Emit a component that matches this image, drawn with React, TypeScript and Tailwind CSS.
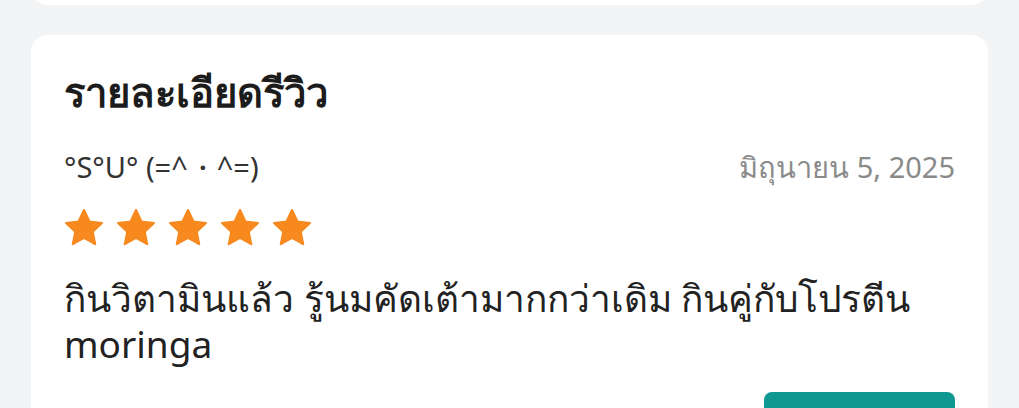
const STARS = [0, 1, 2, 3, 4];

function Star() {
  return (
    <svg viewBox="0 0 24 24" className="h-[44px] w-[44px]" fill="#f7891f">
      <path d="M12 2.2l2.95 6.3 6.85.8-5.08 4.7 1.37 6.8L12 17.4l-6.09 3.4 1.37-6.8L2.2 9.3l6.85-.8z" strokeLinejoin="round" stroke="#f7891f" strokeWidth="1.2" />
    </svg>
  );
}

export default function App() {
  return (
    <div className="h-[408px] overflow-hidden bg-[#f3f4f6] font-['Noto_Sans','Roboto',sans-serif]">
      <div className="mx-[31px] -mt-[20px] h-[25px] rounded-b-[16px] bg-white" />
      <section className="mx-[31px] mt-[30px] rounded-[16px] bg-white px-[33px] pt-[29px]">
        <h2 className="text-[40px] font-bold leading-[56px] text-[#1c1c1c]">รายละเอียดรีวิว</h2>
        <div className="mt-[27px] flex items-center justify-between">
          <p className="text-[29px] leading-[40px] text-[#333]">°S°U° (=^・^=)</p>
          <p className="text-[29px] leading-[40px] text-[#8a8a8a]">มิถุนายน 5, 2025</p>
        </div>
        <div className="-ml-[2px] mt-[19px] flex gap-[8px]">
          {STARS.map((i) => (
            <Star key={i} />
          ))}
        </div>
        <p className="mt-[25px] text-[37px] leading-[46px] text-[#222]">
          กินวิตามินแล้ว รู้นมคัดเต้ามากกว่าเดิม กินคู่กับโปรตีน moringa
        </p>
        <div className="mt-[25px] flex justify-end">
          <button className="h-[60px] w-[191px] rounded-[8px] bg-[#0f9891]" />
        </div>
      </section>
    </div>
  );
}
